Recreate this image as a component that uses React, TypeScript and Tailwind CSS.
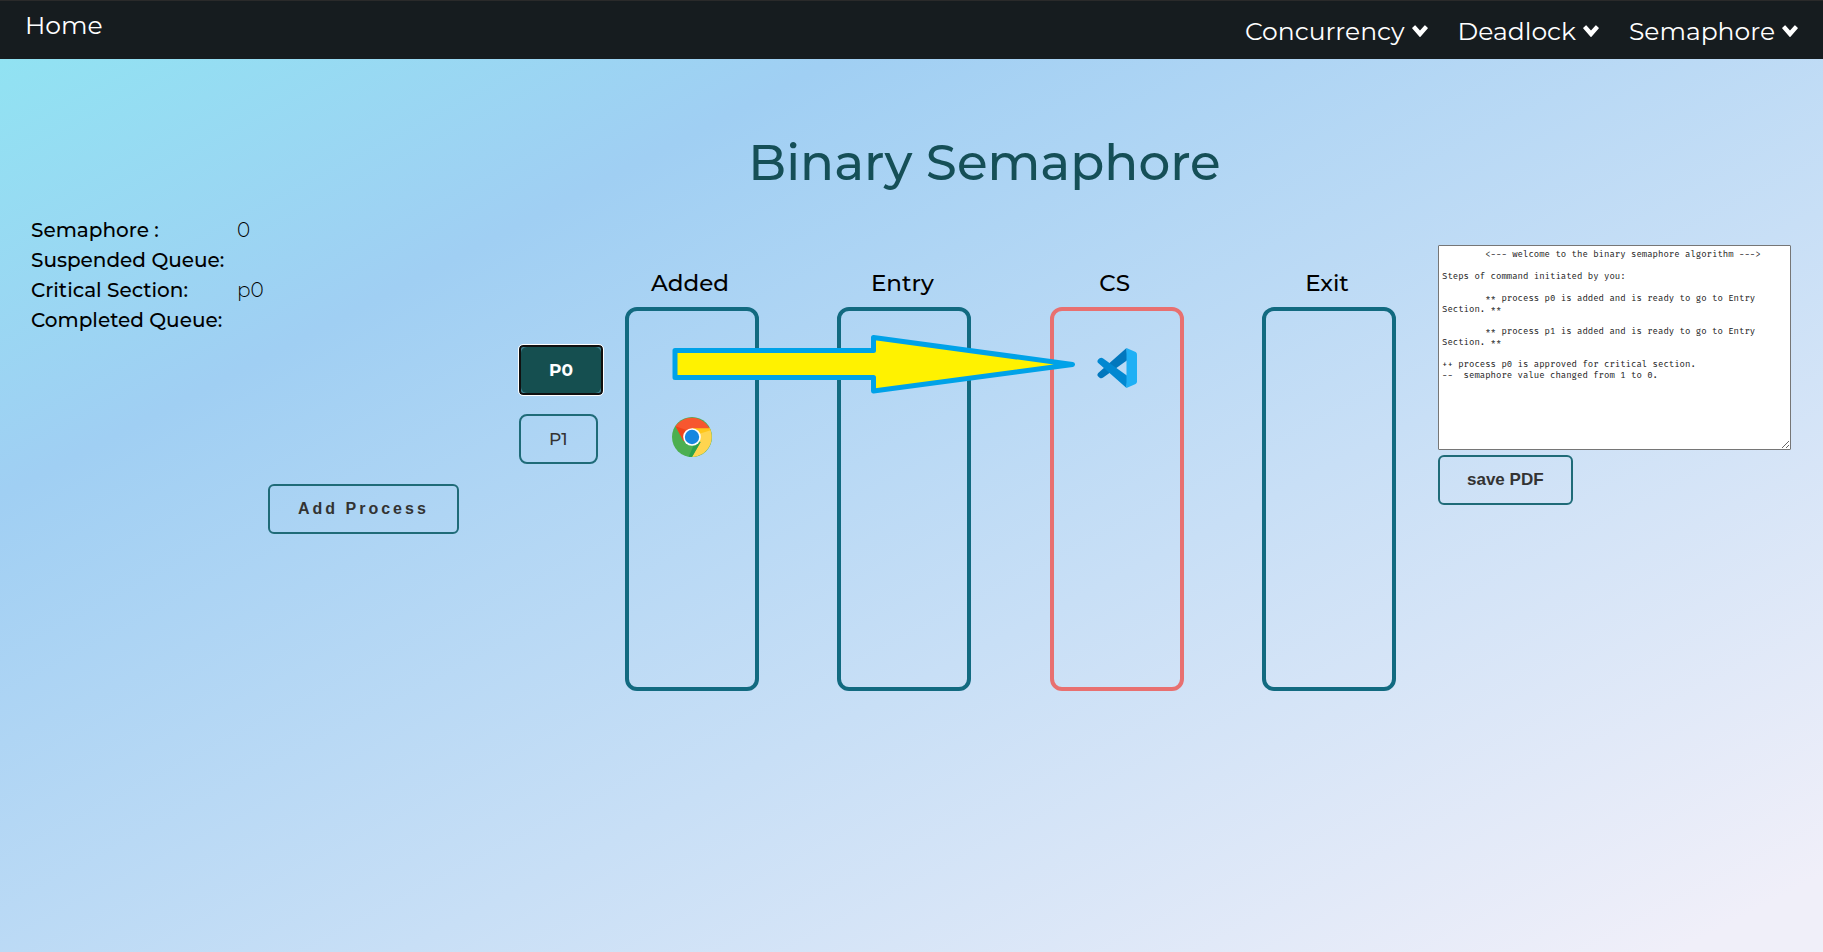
import type { ReactNode } from "react";

const menus = ["Concurrency", "Deadlock", "Semaphore"];

const status = [
  { label: "Semaphore :", value: "0" },
  { label: "Suspended Queue:", value: "" },
  { label: "Critical Section:", value: "p0" },
  { label: "Completed Queue:", value: "" },
];

const log = `\t<--- welcome to the binary semaphore algorithm --->

Steps of command initiated by you:

\t** process p0 is added and is ready to go to Entry Section. **

\t** process p1 is added and is ready to go to Entry Section. **

++ process p0 is approved for critical section.
--  semaphore value changed from 1 to 0.
`;

function Chevron() {
  return (
    <svg viewBox="0 0 16 12" className="h-3 w-4" fill="currentColor" aria-hidden="true">
      <path d="M0.3 3.6 Q0 3.2 0.3 2.8 L2.7 0.4 Q3.1 0 3.5 0.4 L8 5.4 L12.5 0.4 Q12.9 0 13.3 0.4 L15.7 2.8 Q16 3.2 15.7 3.6 L8.5 11.7 Q8 12.2 7.5 11.7 Z" />
    </svg>
  );
}

function ChromeIcon() {
  return (
    <svg viewBox="0 0 48 48" className="size-10" role="img" aria-label="Process p1">
      <circle cx="24" cy="24" r="24" fill="#4caf50" />
      <path d="M24 24 L34.4 30 L24 48 A24 24 0 0 0 45 13 L24 13 Z" fill="#ffd54f" />
      <path d="M24 13 H45 A24 24 0 0 1 46.4 16 L33 20 Z" fill="#ffc61a" />
      <path d="M4.2 11 A24 24 0 0 1 45 13.6 H24 L14 29 Z" fill="#f7572f" />
      <path d="M4.2 11 L14 29 L18 16 Z" fill="#ef4318" />
      <path d="M34.4 30 L24 48 L20 47.6 L26 34 Z" fill="#2ba24c" />
      <circle cx="24" cy="24" r="10.6" fill="#fff" />
      <circle cx="24" cy="24" r="8.6" fill="#1687e0" />
    </svg>
  );
}

function CodeIcon() {
  return (
    <svg viewBox="0 0 40 40" className="size-10" role="img" aria-label="Process p0">
      <path d="M29.5 0 L1.2 25 Q-0.4 26.8 1.2 28.6 L2.6 29.8 Q4.4 31 6.2 29.6 L30.5 12 Z" fill="#0277bd" />
      <path d="M29.5 40 L1.2 15 Q-0.4 13.2 1.2 11.4 L2.6 10.2 Q4.4 9 6.2 10.4 L30.5 28 Z" fill="#0288d1" />
      <path d="M29.5 0 L38.6 4 Q40 4.8 40 6.4 V33.6 Q40 35.2 38.6 36 L29.5 40 Z" fill="#1fb0f5" />
    </svg>
  );
}

function Stage({ name, critical, children }: { name: string; critical?: boolean; children?: ReactNode }) {
  return (
    <section className="w-[134px]">
      <h2 className="pr-1 text-center text-[23px] leading-8 font-medium text-black">{name}</h2>
      <div
        className={
          critical
            ? "mt-2 flex h-96 flex-col items-center rounded-xl border-4 border-[#e87070] pt-[37px]"
            : "mt-2 flex h-96 flex-col items-center rounded-xl border-4 border-[#126a80] pt-[37px]"
        }
      >
        {children}
      </div>
    </section>
  );
}

export default function App() {
  return (
    <div className="flex min-h-screen flex-col bg-[linear-gradient(to_bottom_right,#8fe5f2_0%,#a0cff3_26%,#f0eff9_96%)] font-[Montserrat,Inter,sans-serif] text-black">
      <nav className="flex h-[59px] items-start justify-between border-t border-[#2a2a2a] bg-[#161c1f] px-[25px] text-[25px] leading-8 text-white">
        <a href="#home" className="mt-2">Home</a>
        <div className="mt-3.5 flex gap-[30px]">
          {menus.map((m) => (
            <button key={m} type="button" className="flex items-center gap-[7px]">
              {m}
              <Chevron />
            </button>
          ))}
        </div>
      </nav>

      <main className="grid grid-cols-[519fr_919fr_385fr] pt-[71px]">
        <h1 className="col-start-2 pl-3 text-center text-[50px] leading-[66px] font-medium text-[#154f57]">
          Binary Semaphore
        </h1>

        <aside className="col-start-1 row-start-2 pt-[19px] pl-[31px]">
          <dl className="text-xl leading-[30px]">
            {status.map((s) => (
              <div key={s.label} className="flex h-[30px]">
                <dt className="w-[206px] font-medium">{s.label}</dt>
                <dd className="font-light">{s.value}</dd>
              </div>
            ))}
          </dl>
          <button
            type="button"
            className="mt-[149px] ml-[237px] h-[50px] rounded-md border-2 border-[#1f6b78] px-7 font-['Liberation_Sans',Arial,sans-serif] text-base font-bold tracking-[3px] text-[#333]"
          >
            Add Process
          </button>
        </aside>

        <div className="col-start-2 row-start-2 flex pt-[71px] pr-[42px]">
          <div className="flex w-[106px] shrink-0 flex-col items-start gap-[19px] pt-[78px]">
            <button
              type="button"
              className="h-[50px] rounded-sm border-2 border-[#101010] bg-[#3c7f8f] text-[17px] font-bold text-white outline outline-white"
            >
              <span className="flex h-full items-center rounded-md bg-[#154f50] px-7 pt-0.5">P0</span>
            </button>
            <button
              type="button"
              className="h-[50px] rounded-lg border-2 border-[#1f6b78] px-7 pt-0.5 text-[17px] font-medium text-[#333]"
            >
              P1
            </button>
          </div>
          <div className="relative flex flex-1 justify-between">
            <Stage name="Added">
              <div className="mt-[69px]">
                <ChromeIcon />
              </div>
            </Stage>
            <Stage name="Entry" />
            <Stage name="CS" critical>
              <CodeIcon />
            </Stage>
            <Stage name="Exit" />
            <svg viewBox="0 0 406 60" className="absolute top-[68px] left-[46px] w-[406px]" aria-hidden="true">
              <path
                d="M4 15.5 H202.5 V2.5 L401.5 29.5 L202.5 56 V42.5 H4 Z"
                fill="#fff200"
                stroke="#00a2e8"
                strokeWidth="5"
                strokeLinejoin="round"
              />
            </svg>
          </div>
        </div>

        <div className="col-start-3 row-start-2 flex flex-col items-start pt-[49px] pr-8">
          <textarea
            aria-label="Command log"
            defaultValue={log}
            spellCheck={false}
            className="h-[205px] w-full rounded-[1px] border border-[#767676] bg-white px-[3px] py-[3px] font-['Fira_Mono','DejaVu_Sans_Mono',monospace] text-[9px] leading-[11px] text-[#222] [tab-size:8]"
          />
          <button
            type="button"
            className="mt-[5px] h-[50px] rounded-md border-2 border-[#1f6b78] px-[27px] font-['Liberation_Sans',Arial,sans-serif] text-[17px] font-bold text-[#333]"
          >
            save PDF
          </button>
        </div>
      </main>
    </div>
  );
}
